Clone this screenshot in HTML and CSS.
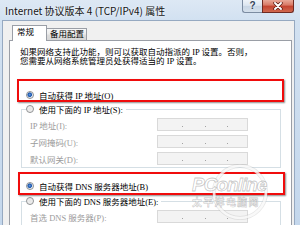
FILE: index.html
```html
<!DOCTYPE html>
<html lang="zh-CN">
<head>
<meta charset="utf-8">
<title>Internet 协议版本 4 (TCP/IPv4) 属性</title>
<link rel="stylesheet" href="styles.css">
</head>
<body>
<div class="window">
  <div class="titlebar">
    <span class="title">Internet 协议版本 4 (TCP/IPv4) 属性</span>
    <div class="controls">
      <span class="btn-help">?</span>
      <span class="btn-close">
        <svg width="10" height="8" viewBox="0 0 10 8">
          <path d="M2 1 L8 7 M8 1 L2 7" stroke="#5a1a12" stroke-width="3.4" stroke-linecap="round"/>
          <path d="M2 1 L8 7 M8 1 L2 7" stroke="#ffffff" stroke-width="1.9" stroke-linecap="round"/>
        </svg>
      </span>
    </div>
  </div>
  <div class="client">
    <div class="tabs">
      <span class="tab active">常规</span>
      <span class="tab">备用配置</span>
    </div>
    <div class="panel">
      <p class="desc">如果网络支持此功能，则可以获取自动指派的 IP 设置。否则，<br>您需要从网络系统管理员处获得适当的 IP 设置。</p>

      <div class="radio-row r1"><span class="radio on"></span><span>自动获得 IP 地址(O)</span></div>

      <fieldset class="group">
        <legend><span class="radio-row in-legend"><span class="radio"></span><span>使用下面的 IP 地址(S):</span></span></legend>
        <div class="fields">
          <span class="label">IP 地址(I):</span>
          <span class="ipbox"><i></i><b></b><i></i><b></b><i></i><b></b><i></i></span>
          <span class="label">子网掩码(U):</span>
          <span class="ipbox"><i></i><b></b><i></i><b></b><i></i><b></b><i></i></span>
          <span class="label">默认网关(D):</span>
          <span class="ipbox"><i></i><b></b><i></i><b></b><i></i><b></b><i></i></span>
        </div>
      </fieldset>

      <div class="radio-row r3"><span class="radio on"></span><span>自动获得 DNS 服务器地址(B)</span></div>

      <fieldset class="group g2">
        <legend><span class="radio-row in-legend"><span class="radio"></span><span>使用下面的 DNS 服务器地址(E):</span></span></legend>
        <div class="fields">
          <span class="label">首选 DNS 服务器(P):</span>
          <span class="ipbox"><i></i><b></b><i></i><b></b><i></i><b></b><i></i></span>
        </div>
      </fieldset>

      <div class="mark mark1"></div>
      <div class="mark mark2"></div>

      <svg class="watermark" width="110" height="62" viewBox="0 0 110 62">
        <circle cx="60" cy="32" r="26" fill="none" stroke="rgba(160,160,160,0.25)" stroke-width="4"/>
        <circle cx="60" cy="32" r="26" fill="none" stroke="rgba(255,255,255,0.75)" stroke-width="2.6"/>
        <text x="12" y="31" class="wm-big">PConline</text>
        <text x="12" y="46" class="wm-small">太平洋电脑网</text>
      </svg>
    </div>
  </div>
</div>
</body>
</html>
```
FILE: styles.css
```css
html, body {
  margin: 0;
  padding: 0;
}

body {
  width: 300px;
  height: 225px;
  overflow: hidden;
  font-family: "Liberation Serif", "Noto Sans CJK SC", serif;
  font-size: 8.5px;
  color: #000;
}

.window {
  width: 300px;
  height: 225px;
  overflow: hidden;
  background: linear-gradient(180deg, #dde8f4 0, #d2e1f1 20px, #c4d7ec 100%);
}

.titlebar {
  display: flex;
  align-items: flex-start;
  height: 20px;
}

.title {
  flex: 1;
  font-family: "Noto Sans CJK SC", sans-serif;
  font-size: 10px;
  line-height: 20px;
  padding: 1px 0 0 5px;
  color: #151515;
  white-space: nowrap;
  text-shadow: 0 0 3px #fff;
}

.controls {
  display: flex;
  margin-right: 6px;
}

.btn-help {
  width: 20px;
  height: 13px;
  box-sizing: border-box;
  border: 1px solid #7c8ca1;
  border-top: 0;
  border-right: 0;
  border-bottom-left-radius: 3px;
  background: linear-gradient(180deg, #eef3f8 0, #dde6f0 45%, #c9d6e4 52%, #d5e0ec 100%);
  font-family: "Liberation Sans", sans-serif;
  font-weight: bold;
  font-size: 10px;
  line-height: 12px;
  text-align: center;
  color: #36455a;
  text-shadow: 0 0 2px #fff;
}

.btn-close {
  width: 32px;
  height: 13px;
  box-sizing: border-box;
  border: 1px solid #6e2a22;
  border-top: 0;
  border-bottom-right-radius: 3px;
  background: linear-gradient(180deg, #e8a898 0, #d97a66 42%, #c44430 52%, #d0684f 100%);
  display: flex;
  align-items: center;
  justify-content: center;
}

.btn-close svg {
  display: block;
}

.client {
  margin-left: 2px;
  width: 293px;
  height: 205px;
  box-sizing: border-box;
  border: 1px solid #96a9c1;
  border-bottom: 0;
  background: #f0f0f0;
}

.tabs {
  display: flex;
  align-items: flex-end;
  height: 14px;
  margin: 5px 0 0 9px;
}

.tab {
  height: 11px;
  line-height: 10px;
  padding: 0 2px 0 3px;
  border: 1px solid #9a9ea6;
  border-bottom: 0;
  margin-left: -1px;
  background: linear-gradient(180deg, #f7f7f7 0, #ececec 48%, #dedede 52%, #d6d6d6 100%);
  white-space: nowrap;
}

.tab.active {
  position: relative;
  z-index: 1;
  height: 15px;
  line-height: 12px;
  margin-left: 0;
  margin-bottom: -1px;
  padding: 0 12px 0 4px;
  background: #fff;
}

.panel {
  position: relative;
  margin-left: 6px;
  width: 283px;
  height: 185px;
  box-sizing: border-box;
  border: 1px solid #9a9ea6;
  border-bottom: 0;
  background: #fff;
  padding: 7px 0 0 10px;
  overflow: hidden;
}

.desc {
  margin: 0;
  line-height: 8.5px;
  white-space: nowrap;
}

.radio-row {
  display: flex;
  align-items: center;
  height: 10px;
  margin-left: 6px;
  white-space: nowrap;
}

.radio-row.in-legend {
  margin-left: 0;
}

.r1 {
  margin-top: 25px;
}

.r3 {
  margin-top: 13px;
}

.radio {
  flex: none;
  width: 8px;
  height: 8px;
  box-sizing: border-box;
  border: 1px solid #8e9092;
  border-radius: 50%;
  margin-right: 5px;
  background: radial-gradient(circle at 50% 50%, #e4e4e4 0, #f6f6f6 100%);
}

.radio.on {
  background: radial-gradient(circle at 45% 45%, #6aa3e6 0, #1f58ad 1.6px, #2a63b4 2px, #dfe7f2 2.6px, #f4f4f4 100%);
}

.group {
  margin: 4px 0 0 1px;
  padding: 0 0 2px 0;
  width: 260px;
  min-width: 0;
  box-sizing: border-box;
  border: 1px solid #d5dfe5;
}

.group legend {
  padding: 0 3px 0 0;
  margin-left: 4px;
}

.g2 {
  margin-top: 5px;
}

.fields {
  display: grid;
  grid-template-columns: 127px 91px;
  grid-auto-rows: 13px;
  row-gap: 4px;
  align-items: center;
  padding: 4px 0 0 8px;
}

.label {
  color: #9c9c9c;
  white-space: nowrap;
}

.ipbox {
  display: grid;
  grid-template-columns: 23px 2px 21px 2px 20px 2px 1fr;
  width: 91px;
  height: 13px;
  box-sizing: border-box;
  border: 1px solid #d9d9d9;
  background: #f3f3f3;
}

.ipbox b {
  justify-self: center;
  align-self: center;
  width: 1px;
  height: 1px;
  margin-top: 3px;
  background: #a3a3a3;
}

.mark {
  position: absolute;
  width: 267px;
  height: 23px;
  box-sizing: border-box;
  border: 2.5px solid #f00c0c;
  box-shadow: 1px 1px 1.5px rgba(0, 0, 0, 0.45);
}

.mark1 {
  left: 7px;
  top: 38px;
}

.mark2 {
  left: 8px;
  top: 131px;
}

.watermark {
  position: absolute;
  left: 170px;
  top: 119px;
}

.wm-big {
  font-family: "Liberation Sans", sans-serif;
  font-weight: bold;
  font-style: italic;
  font-size: 19px;
  letter-spacing: -1px;
  fill: rgba(255, 255, 255, 0.6);
  stroke: rgba(130, 130, 130, 0.45);
  stroke-width: 0.8px;
}

.wm-small {
  font-family: "Noto Sans CJK SC", sans-serif;
  font-weight: bold;
  font-size: 10px;
  letter-spacing: 1.3px;
  fill: rgba(255, 255, 255, 0.6);
  stroke: rgba(130, 130, 130, 0.45);
  stroke-width: 0.6px;
}
```
